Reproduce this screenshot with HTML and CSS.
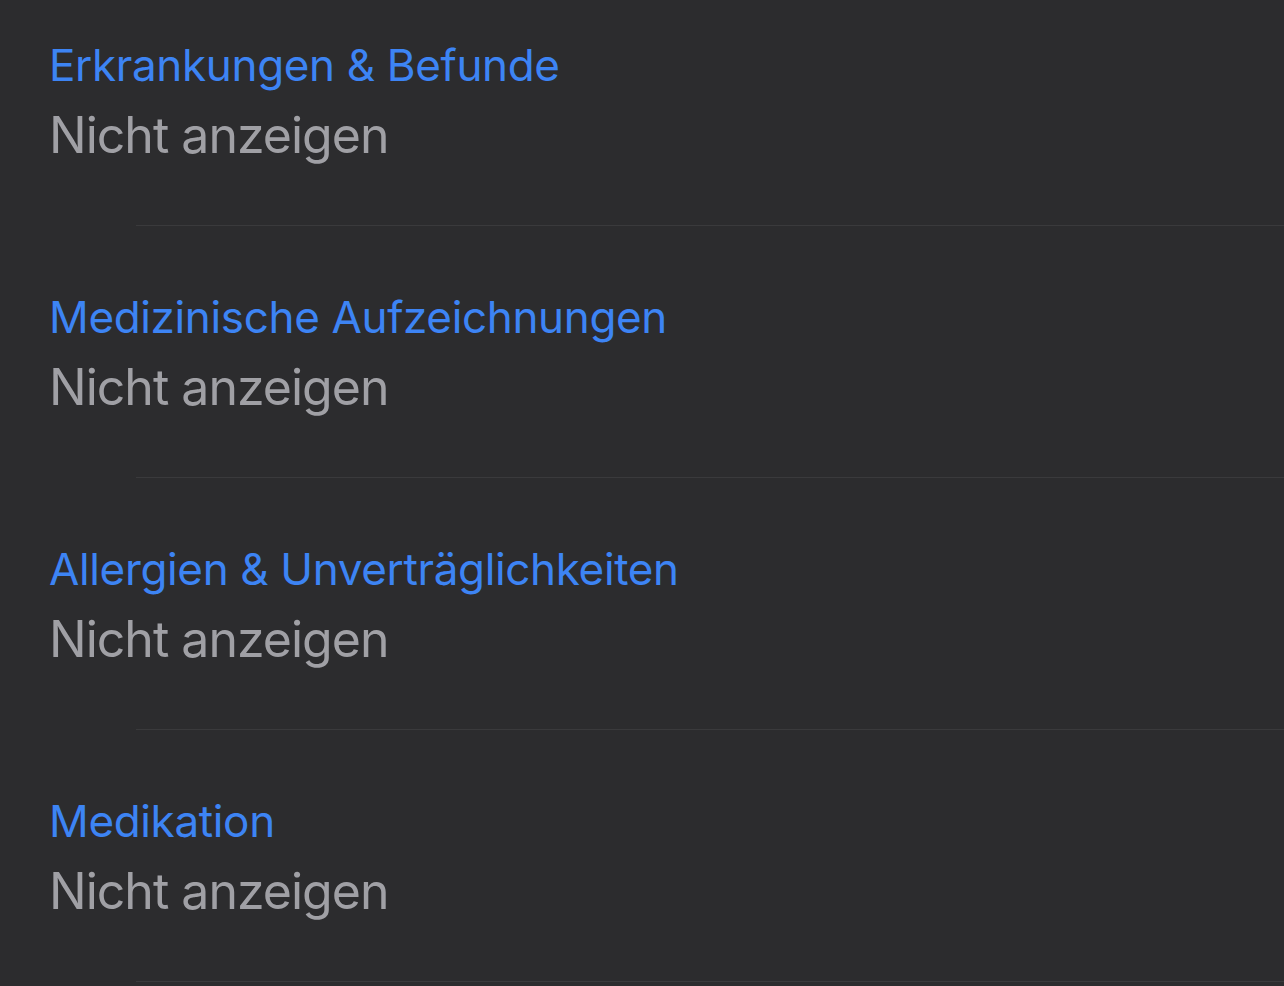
FILE: index.html
```html
<!DOCTYPE html>
<html lang="de">
<head>
<meta charset="utf-8">
<link rel="stylesheet" href="styles.css">
</head>
<body>
<div class="list">
  <div class="row">
    <div class="title">Erkrankungen &amp; Befunde</div>
    <div class="value">Nicht anzeigen</div>
  </div>
  <div class="sep"></div>
  <div class="row">
    <div class="title">Medizinische Aufzeichnungen</div>
    <div class="value">Nicht anzeigen</div>
  </div>
  <div class="sep"></div>
  <div class="row">
    <div class="title">Allergien &amp; Unverträglichkeiten</div>
    <div class="value">Nicht anzeigen</div>
  </div>
  <div class="sep"></div>
  <div class="row">
    <div class="title">Medikation</div>
    <div class="value">Nicht anzeigen</div>
  </div>
  <div class="sep"></div>
</div>
</body>
</html>
```
FILE: styles.css
```css
html, body {
  margin: 0;
  padding: 0;
  background: #2c2c2e;
  height: 100%;
  overflow: hidden;
}
body {
  font-family: Inter, "Noto Sans", sans-serif;
}
.list {
  margin-top: -26px;
}
.row {
  height: 251px;
  box-sizing: border-box;
  padding-left: 49px;
  padding-top: 64px;
  display: flex;
  flex-direction: column;
}
.title {
  color: #3d84f4;
  font-size: 44px;
  letter-spacing: -0.35px;
  line-height: 54px;
}
.value {
  color: #a0a0a5;
  font-size: 50px;
  letter-spacing: -1px;
  line-height: 70px;
  margin-top: 8px;
}
.sep {
  height: 1px;
  margin-left: 136px;
  background: #3a3a3c;
}
```
